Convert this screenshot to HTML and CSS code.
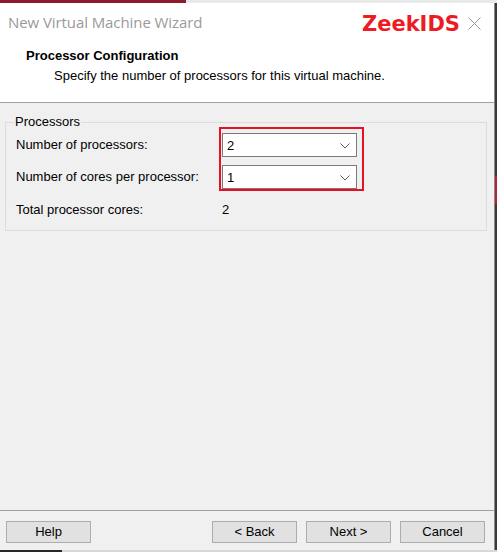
FILE: index.html
```html
<!DOCTYPE html>
<html>
<head>
<meta charset="utf-8">
<link rel="stylesheet" href="styles.css">
</head>
<body>
<div class="desk">
  <div class="window">
    <div class="header">
      <div class="titlebar">
        <span class="title">New Virtual Machine Wizard</span>
        <span class="brand">ZeekIDS</span>
        <svg class="close" width="13" height="13" viewBox="0 0 13 13"><path d="M0.5 0.5 L12.5 12.5 M12.5 0.5 L0.5 12.5" stroke="#9a9a9a" stroke-width="1" fill="none"/></svg>
      </div>
      <div class="heading">Processor Configuration</div>
      <div class="desc">Specify the number of processors for this virtual machine.</div>
    </div>
    <div class="content">
      <fieldset class="group">
        <legend class="legend">Processors</legend>
        <div class="rows">
          <div class="labels">
            <div class="lbl">Number of processors:</div>
            <div class="lbl">Number of cores per processor:</div>
            <div class="lbl total">Total processor cores:</div>
          </div>
          <div class="values">
            <div class="redbox">
              <div class="combo"><span>2</span><svg width="10" height="6" viewBox="0 0 10 6"><polyline points="0.5,0.5 5,5 9.5,0.5" fill="none" stroke="#5a5a5a" stroke-width="1"/></svg></div>
              <div class="combo"><span>1</span><svg width="10" height="6" viewBox="0 0 10 6"><polyline points="0.5,0.5 5,5 9.5,0.5" fill="none" stroke="#5a5a5a" stroke-width="1"/></svg></div>
            </div>
            <div class="totalval">2</div>
          </div>
        </div>
      </fieldset>
    </div>
    <div class="footer">
      <button class="btn">Help</button>
      <div class="spacer"></div>
      <button class="btn">&lt; Back</button>
      <button class="btn">Next &gt;</button>
      <button class="btn">Cancel</button>
    </div>
  </div>
</div>
</body>
</html>
```

FILE: styles.css
```css
html, body {
  margin: 0;
  padding: 0;
}
body {
  width: 497px;
  height: 552px;
  overflow: hidden;
  background:
    linear-gradient(to right, #8b1d2c 0, #8b1d2c 186px, #e9e9e9 186px, #e9e9e9 100%) top left / 100% 3px no-repeat,
    linear-gradient(to right, #2e2430 0, #2e2430 62px, #d8d8d8 62px) bottom left / 100% 2px no-repeat,
    linear-gradient(to bottom, #3a3a3a 0, #3a3a3a 176px, #b0262c 176px, #b0262c 204px, #3a3a3a 204px) right top / 3px 100% no-repeat,
    #3a3a3a;
  font-family: "Liberation Sans", Arial, sans-serif;
  font-size: 13px;
  color: #000;
}
.desk {
  padding-top: 3px;
}
.window {
  width: 494px;
  height: 547px;
  border-right: 1px solid #8c8c8c;
  background: #f0f0f0;
  display: flex;
  flex-direction: column;
}
.header {
  background: #fff;
  height: 99px;
  border-bottom: 1px solid #a0a0a0;
}
.titlebar {
  height: 38px;
  display: flex;
  align-items: center;
  padding-left: 8px;
  padding-right: 13px;
}
.title {
  font-family: "Open Sans", "Noto Sans", sans-serif;
  font-size: 15px;
  letter-spacing: -0.08px;
  color: #9a9a9a;
  flex: 1;
}
.brand {
  font-family: "DejaVu Sans", Verdana, sans-serif;
  font-weight: bold;
  font-size: 21px;
  color: #ed1c24;
  margin-right: 8px;
  padding-top: 3px;
}
.close {
  display: block;
  margin-top: 2px;
}
.heading {
  font-weight: bold;
  line-height: 16px;
  margin-top: 7px;
  padding-left: 26px;
}
.desc {
  line-height: 16px;
  margin-top: 4px;
  padding-left: 54px;
}
.content {
  flex: 1;
  padding-top: 14px;
}
.group {
  margin: 0 7px 0 5px;
  padding: 0 0 12px 0;
  border: 1px solid #dcdcdc;
  min-width: 0;
}
.legend {
  margin-left: 8px;
  padding: 0 1px;
  line-height: 10px;
}
.rows {
  display: flex;
  padding-left: 10px;
}
.labels {
  width: 203px;
  padding-top: 6px;
  display: flex;
  flex-direction: column;
  gap: 8px;
}
.lbl {
  line-height: 24px;
  height: 24px;
}
.lbl.total {
  line-height: 16px;
  height: 16px;
  margin-top: 5px;
}
.redbox {
  border: 2px solid #e81123;
  padding: 4px 5px 0 1px;
  width: 135px;
  display: flex;
  flex-direction: column;
  gap: 8px;
}
.combo {
  height: 22px;
  border: 1px solid #7a7a7a;
  background: #fff;
  display: flex;
  align-items: center;
  justify-content: space-between;
  padding: 0 6px 0 4px;
}
.combo svg {
  display: block;
  margin-top: 1px;
}
.totalval {
  margin-top: 11px;
  line-height: 16px;
  padding-left: 3px;
}
.footer {
  height: 40px;
  border-top: 1px solid #a0a0a0;
  display: flex;
  align-items: flex-start;
  padding: 10px 9px 0 6px;
  box-sizing: border-box;
  gap: 9px;
}
.spacer {
  flex: 1;
}
.btn {
  width: 85px;
  height: 22px;
  margin: 0;
  padding: 0 0 1px 0;
  border: 1px solid #adadad;
  background: #e1e1e1;
  font-family: "Liberation Sans", Arial, sans-serif;
  font-size: 13px;
  color: #000;
}
```
